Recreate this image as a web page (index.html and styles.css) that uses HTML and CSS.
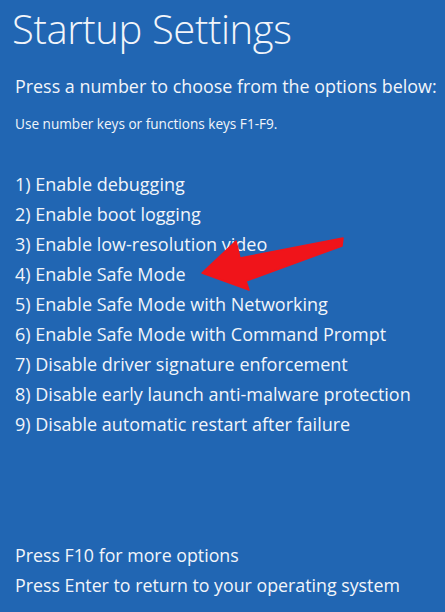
FILE: index.html
```html
<!DOCTYPE html>
<html>
<head>
<meta charset="utf-8">
<link rel="stylesheet" href="styles.css">
</head>
<body>
<div class="screen">
  <h1 class="title">Startup Settings</h1>
  <p class="lead">Press a number to choose from the options below:</p>
  <p class="hint">Use number keys or functions keys F1-F9.</p>
  <ol class="options">
    <li>1) Enable debugging</li>
    <li>2) Enable boot logging</li>
    <li>3) Enable low-resolution video</li>
    <li>4) Enable Safe Mode</li>
    <li>5) Enable Safe Mode with Networking</li>
    <li>6) Enable Safe Mode with Command Prompt</li>
    <li>7) Disable driver signature enforcement</li>
    <li>8) Disable early launch anti-malware protection</li>
    <li>9) Disable automatic restart after failure</li>
  </ol>
  <div class="footer">
    <p>Press F10 for more options</p>
    <p>Press Enter to return to your operating system</p>
  </div>
  <svg class="arrow" width="445" height="612" viewBox="0 0 445 612">
    <polygon points="202,273 236,241 240,258 343,238 342,246 246,281 249,290" fill="#f0141a" stroke="#f0141a" stroke-width="1.5" stroke-linejoin="round"/>
  </svg>
</div>
</body>
</html>
```
FILE: styles.css
```css
html, body {
  margin: 0;
  padding: 0;
  background: #2166b3;
}
.screen {
  position: relative;
  width: 445px;
  height: 612px;
  overflow: hidden;
  background: #2166b3;
  color: #f2f5fa;
  font-family: "Open Sans", "Noto Sans", sans-serif;
  box-sizing: border-box;
  padding: 0 0 0 14px;
  display: flex;
  flex-direction: column;
}
.title {
  margin: 4px 0 0 -2px;
  font-size: 40px;
  font-weight: 300;
  line-height: 50px;
  letter-spacing: -0.4px;
}
.lead {
  margin: 20px 0 0 1px;
  font-size: 17.9px;
  line-height: 24px;
  font-weight: 400;
  white-space: nowrap;
}
.hint {
  margin: 17px 0 0 1px;
  font-size: 13.6px;
  line-height: 18px;
}
.options {
  list-style: none;
  margin: 36px 0 0 1px;
  padding: 0;
  font-size: 18px;
  line-height: 30px;
}
.footer {
  margin-top: auto;
  margin-bottom: 12px;
  margin-left: 1px;
  font-size: 17.8px;
  line-height: 30px;
}
.footer p {
  margin: 0;
}
.arrow {
  position: absolute;
  left: 0;
  top: 0;
}
```
